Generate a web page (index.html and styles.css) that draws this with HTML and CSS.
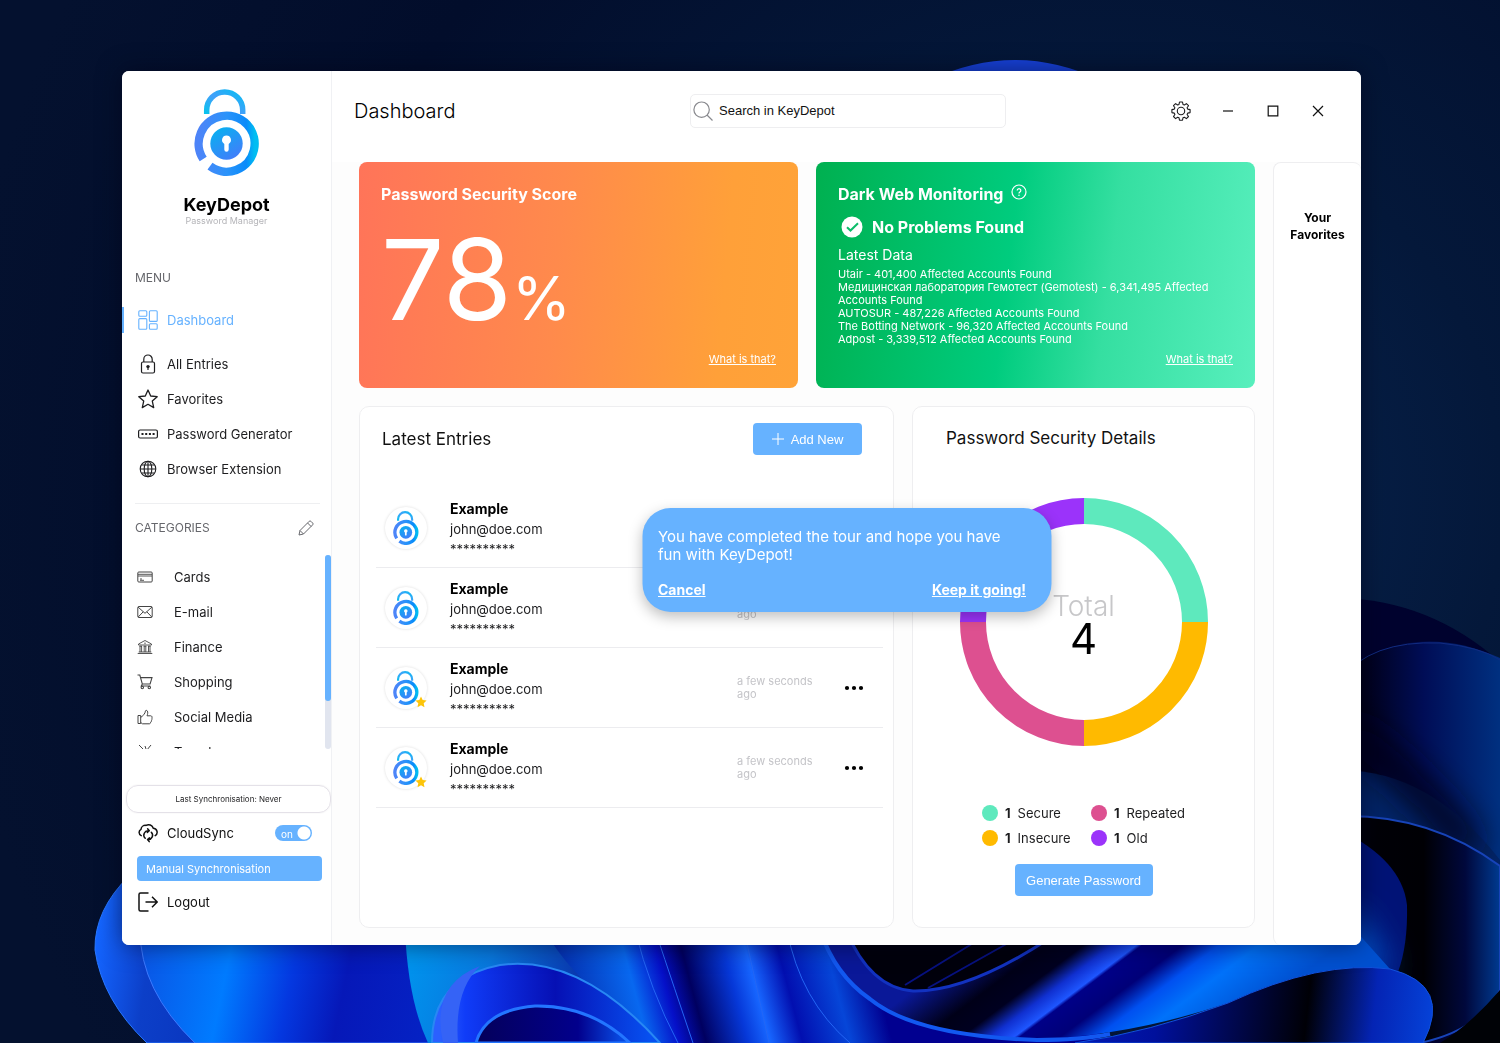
FILE: index.html
```html
<!DOCTYPE html>
<html lang="en">
<head>
<meta charset="utf-8">
<meta name="viewport" content="width=device-width, initial-scale=1">
<title>KeyDepot - Dashboard</title>
<link rel="stylesheet" href="styles.css">
</head>
<body>
<svg class="wallpaper" viewBox="0 0 1500 1043" preserveAspectRatio="xMidYMid slice" aria-hidden="true">
  <defs>
    <radialGradient id="night" cx="1100" cy="500" r="1150" gradientUnits="userSpaceOnUse"><stop offset="0" stop-color="#082654"/><stop offset=".35" stop-color="#04183a"/><stop offset=".7" stop-color="#020d2b"/><stop offset="1" stop-color="#04112f"/></radialGradient>
    <linearGradient id="petal" x1="95" x2="430" y1="950" y2="1000" gradientUnits="userSpaceOnUse"><stop offset="0" stop-color="#1465ff"/><stop offset=".16" stop-color="#0c3fc8"/><stop offset="1" stop-color="#0015a0"/></linearGradient>
    <linearGradient id="petal2" x1="140" x2="430" y1="950" y2="1010" gradientUnits="userSpaceOnUse"><stop offset="0" stop-color="#0a54e4"/><stop offset=".3" stop-color="#007bff"/><stop offset=".52" stop-color="#0438e0"/><stop offset=".7" stop-color="#0618b8"/><stop offset="1" stop-color="#0522c4"/></linearGradient>
    <linearGradient id="cyan" x1="405" x2="600" y1="960" y2="1020" gradientUnits="userSpaceOnUse"><stop offset="0" stop-color="#0094ee"/><stop offset=".4" stop-color="#0878de"/><stop offset="1" stop-color="#0a1f9e"/></linearGradient>
    <linearGradient id="loop" x1="440" x2="650" y1="0" y2="0" gradientUnits="userSpaceOnUse"><stop offset="0" stop-color="#2b60ff"/><stop offset=".12" stop-color="#103cf8"/><stop offset=".55" stop-color="#0610b4"/><stop offset="1" stop-color="#0750f0"/></linearGradient>
    <linearGradient id="hole" x1="480" x2="620" y1="0" y2="0" gradientUnits="userSpaceOnUse"><stop offset="0" stop-color="#04005c"/><stop offset=".7" stop-color="#02008c"/><stop offset="1" stop-color="#0848e0"/></linearGradient>
    <linearGradient id="strand" x1="560" x2="860" y1="40" y2="-40" gradientUnits="userSpaceOnUse" gradientTransform="translate(0 960)"><stop offset="0" stop-color="#0428a8"/><stop offset=".24" stop-color="#0868f0"/><stop offset=".34" stop-color="#0510c8"/><stop offset=".42" stop-color="#000060"/><stop offset=".55" stop-color="#0638d8"/><stop offset=".62" stop-color="#1766ff"/><stop offset=".72" stop-color="#020fb0"/><stop offset=".87" stop-color="#0646d8"/><stop offset="1" stop-color="#010090"/></linearGradient>
    <linearGradient id="ribbon" x1="883" x2="1015" y1="1013" y2="1189" gradientUnits="userSpaceOnUse"><stop offset="0" stop-color="#0a1898"/><stop offset=".2" stop-color="#000018"/><stop offset=".3" stop-color="#000020"/><stop offset=".38" stop-color="#1030d0"/><stop offset=".445" stop-color="#1e56ff"/><stop offset=".46" stop-color="#000088"/><stop offset=".57" stop-color="#000078"/><stop offset=".67" stop-color="#0050f0"/><stop offset=".78" stop-color="#0072fa"/><stop offset="1" stop-color="#0050d0"/></linearGradient>
    <linearGradient id="tail" x1="1040" x2="1430" y1="1000" y2="1043" gradientUnits="userSpaceOnUse"><stop offset="0" stop-color="#0520c0"/><stop offset=".3" stop-color="#00109c"/><stop offset=".68" stop-color="#000006"/><stop offset=".85" stop-color="#0424b4"/><stop offset="1" stop-color="#0542d8"/></linearGradient>
    <linearGradient id="right1" x1="1361" x2="1500" y1="0" y2="0" gradientUnits="userSpaceOnUse"><stop offset="0" stop-color="#000018"/><stop offset=".45" stop-color="#000d56"/><stop offset="1" stop-color="#003080"/></linearGradient>
    <linearGradient id="right2" x1="1361" x2="1500" y1="0" y2="0" gradientUnits="userSpaceOnUse"><stop offset="0" stop-color="#000008"/><stop offset=".45" stop-color="#000004"/><stop offset=".75" stop-color="#00083c"/><stop offset="1" stop-color="#003a90"/></linearGradient>
    <filter id="soft" x="-60%" y="-60%" width="220%" height="220%"><feGaussianBlur stdDeviation="16"/></filter>
  </defs>
  <rect width="1500" height="1043" fill="url(#night)"/>
  <path d="M930 80Q1015 40 1100 80Z" fill="#1741d8"/>
  <path d="M1340 598Q1430 600 1500 662V1043H1340Z" fill="#00022e"/>
  <path d="M1340 675Q1410 618 1500 658V900H1340Z" fill="url(#right1)"/>
  <path d="M1340 680Q1370 640 1440 643Q1480 647 1500 660" fill="none" stroke="#122c82"/>
  <path d="M1340 770Q1430 770 1500 860V880H1340Z" fill="#022468"/>
  <path d="M1345 730Q1420 780 1470 850" fill="none" stroke="#00001c" stroke-width="30" filter="url(#soft)"/>
  <path d="M1340 816Q1430 814 1500 866V990Q1480 1030 1420 1043H1340Z" fill="url(#right2)" stroke="#1743b8" stroke-width="2"/>
  <path d="M1340 830Q1402 860 1407 905Q1408 945 1398 972L1340 960Z" fill="#011376"/>
  <path d="M1340 910Q1362 912 1372 940L1392 972H1340Z" fill="#0658ce" filter="url(#soft)"/>
  <path d="M1500 990Q1470 1025 1440 1043H1500Z" fill="#000206"/>
  <path d="M130 875Q94 910 95 950Q102 1000 147 1043H440V930Z" fill="url(#petal)" stroke="#2877ff"/>
  <path d="M140 930Q140 990 195 1043H440V930Z" fill="url(#petal2)" stroke="#3d7aff"/>
  <path d="M405 930Q408 1000 428 1043H700V930Z" fill="url(#cyan)"/>
  <path d="M545 930Q570 980 660 1043H1100V930Z" fill="url(#strand)"/>
  <path d="M432 1043Q432 978 500 965Q580 954 660 1043Z" fill="url(#loop)" stroke="#2888f4" stroke-width="2"/>
  <path d="M443 1043Q430 985 480 966Q454 990 458 1043Z" fill="#3563f6"/>
  <path d="M476 1043Q485 1010 535 1006Q590 1005 630 1043Z" fill="url(#hole)" stroke="#2375ff" stroke-width="3"/>
  <path d="M635 930Q650 990 678 1043M655 930Q675 990 693 1043M744 930L769 1043M787 930Q800 1000 850 1043" fill="none" stroke="#2466f5"/>
  <path d="M820 930Q835 980 870 997Q910 1034 1037 1039Q1130 1036 1228 1003Q1320 960 1390 969L1355 930Z" fill="url(#ribbon)"/>
  <path d="M820 930Q835 975 870 999Q915 1036 1037 1040Q1080 1040 1110 1034" fill="none" stroke="#1258f0" stroke-width="4"/>
  <path d="M846 930Q870 988 913 991Q968 992 1050 938V930Z" fill="#00000c" stroke="#1232c0" stroke-width="3"/>
  <path d="M905 985L975 942M928 988L1010 942" stroke="#071180" stroke-width="2"/>
  <path d="M1075 1043Q1150 1032 1228 1003Q1320 960 1390 969Q1453 985 1423 1043Z" fill="url(#tail)" stroke="#1151dc"/>
</svg>

<svg class="sprite" aria-hidden="true">
  <defs>
    <linearGradient id="g-ring" x1="0" y1="0" x2="1" y2="0"><stop offset="0" stop-color="#4d84f8"/><stop offset=".5" stop-color="#2b93fa"/><stop offset=".85" stop-color="#0a8bfa"/><stop offset="1" stop-color="#00bdf2"/></linearGradient>
    <linearGradient id="g-shackle" x1="0" y1="1" x2="1" y2="0"><stop offset="0" stop-color="#08c3ee"/><stop offset=".5" stop-color="#42a0fa"/><stop offset="1" stop-color="#08bdf2"/></linearGradient>
    <linearGradient id="g-disc" x1="0" y1="0" x2=".6" y2="1"><stop offset="0" stop-color="#02b5ef"/><stop offset="1" stop-color="#3f80fa"/></linearGradient>
  </defs>
  <symbol id="logo" viewBox="0 0 66 87">
    <path d="M12.700 25V21a18 18 0 0 1 36 0V25" fill="none" stroke="url(#g-shackle)" stroke-width="5.500"/>
    <path d="M16 77.200A28 28 0 1 0 9.200 70" fill="none" stroke="url(#g-ring)" stroke-width="8.400"/>
    <circle cx="32.500" cy="54.500" r="16.200" fill="url(#g-disc)"/>
    <path d="M32.500 46.500a4.500 4.500 0 0 0-2.200 8.400v5.600a2.200 2.200 0 0 0 4.400 0v-5.600a4.500 4.500 0 0 0-2.200-8.400Z" fill="#fff"/>
  </symbol>
  <symbol id="i-dash" viewBox="0 0 20 20"><g fill="none" stroke="currentColor" stroke-width="1.100"><rect x=".8" y=".8" width="8" height="5.400" rx="1"/><rect x=".8" y="8.600" width="8" height="10.600" rx="1"/><rect x="11.400" y=".8" width="7.800" height="10.600" rx="1"/><rect x="11.400" y="13.800" width="7.800" height="5.400" rx="1"/></g></symbol>
  <symbol id="i-lock" viewBox="0 0 20 20"><g fill="none" stroke="currentColor" stroke-width="1.200"><rect x="3.500" y="8" width="13" height="11" rx="1.500"/><path d="M5.800 8V5.200a4.200 4.200 0 0 1 8.400 0V8M10 13v3"/></g><circle cx="10" cy="12.600" r="1.700" fill="currentColor"/></symbol>
  <symbol id="i-star" viewBox="0 0 20 20"><path d="M10 1l2.700 6 6.500.700-4.900 4.400 1.400 6.500L10 15.300 4.300 18.600l1.400-6.500L.8 7.700 7.300 7Z" fill="none" stroke="currentColor" stroke-width="1.300" stroke-linejoin="round"/></symbol>
  <symbol id="i-pass" viewBox="0 0 20 20"><rect x=".6" y="6" width="18.800" height="8" rx="1.500" fill="none" stroke="currentColor" stroke-width="1.200"/><path d="M3.500 10h2M7.200 10h2M10.900 10h2M14.600 10h2" stroke="currentColor" stroke-width="2.200"/></symbol>
  <symbol id="i-globe" viewBox="0 0 20 20"><g fill="none" stroke="currentColor" stroke-width="1.100"><circle cx="10" cy="10" r="7.800"/><ellipse cx="10" cy="10" rx="3.800" ry="7.800"/><path d="M10 2v16M2 10h16M3.600 6h12.800M3.600 14h12.800"/></g></symbol>
  <symbol id="i-pencil" viewBox="0 0 16 16"><path d="M1 15l1-4.500L11.200 1.300a1.200 1.200 0 0 1 1.700 0l1.800 1.800a1.200 1.200 0 0 1 0 1.700L5.500 14ZM2 10.500L5.500 14M9.600 3l3.500 3.500" fill="none" stroke="currentColor"/></symbol>
  <symbol id="i-card" viewBox="0 0 16 16"><g fill="none" stroke="currentColor"><rect x=".8" y="3" width="14.400" height="10" rx="1"/><path d="M1 5.300h14M1 7h14M3 10h2M3 11.300h4" stroke-width=".9"/></g></symbol>
  <symbol id="i-mail" viewBox="0 0 16 16"><g fill="none" stroke="currentColor"><rect x=".8" y="2.500" width="14.400" height="11" rx="1"/><path d="M1 3l7 6.300L15 3M1.200 13l5-5.200M14.800 13l-5-5.200"/></g></symbol>
  <symbol id="i-bank" viewBox="0 0 16 16"><path d="M1.500 6V5L8 1.500 14.500 5V6ZM.7 14.500h14.600M1.700 13h12.600M2.500 7.200h2.500M6.700 7.200h2.600M11 7.200h2.500M3 7v6M4.600 7v6M7.200 7v6M8.800 7v6M11.500 7v6M13 7v6M7.200 4.200h1.600" fill="none" stroke="currentColor" stroke-width=".9"/></symbol>
  <symbol id="i-cart" viewBox="0 0 16 16"><g fill="none" stroke="currentColor" stroke-width="1.100"><path d="M.5 1h2.300L5.300 10h7.800L15 3.600H3.600M5.300 10l-1 2h9"/><circle cx="5.300" cy="13.500" r="1.200"/><circle cx="12.300" cy="13.500" r="1.200"/></g></symbol>
  <symbol id="i-thumb" viewBox="0 0 16 16"><path d="M1 6.500h2.700v8H1ZM3.700 13.500L5.500 14.800h6.700c1 0 1.500-.8 1.300-1.600 1-.3 1.300-1.300.9-2 .8-.5.9-1.500.4-2.100.6-.9.100-2.300-1.100-2.300H10c.7-1.600 1-3.500.4-4.700-.5-1-1.800-1-2 0C8.300 4.700 6 6 5.200 7.500L3.700 8.200" fill="none" stroke="currentColor" stroke-linejoin="round"/></symbol>
  <symbol id="i-plane" viewBox="0 0 16 16"><path d="M2 1l5 5M14 1L5 12M8 2l4 12" fill="none" stroke="currentColor"/></symbol>
  <symbol id="i-sync" viewBox="0 0 20 20"><g fill="none" stroke="currentColor" stroke-width="1.500" stroke-linecap="round" stroke-linejoin="round"><path d="M3.200 12.600A3.500 3.500 0 0 1 3 6.300 4.500 4.500 0 0 1 8 2.400a5 5 0 0 1 7.300 2.800 4 4 0 0 1 1.900 7.400"/><path d="M7.200 15.200a4.300 4.300 0 0 1 3.500-7.400M9.600 5.800l1.700 2-2 1.700M13.300 9.200a4.300 4.300 0 0 1-3.600 7.300M11.200 18.600l-1.700-2 2-1.700"/></g></symbol>
  <symbol id="i-logout" viewBox="0 0 20 20"><path d="M10.500 1H2.500A1.500 1.500 0 0 0 1 2.500v15A1.500 1.500 0 0 0 2.500 19h8M7.500 10H19M14 4.800L19.200 10 14 15.200" fill="none" stroke="currentColor" stroke-width="1.500"/></symbol>
  <symbol id="i-search" viewBox="0 0 20 20"><path d="M8.600 1a7.700 7.700 0 1 1 0 15.400 7.700 7.700 0 0 1 0-15.400ZM14 14l5.500 5.500" fill="none" stroke="currentColor" stroke-width="1.200"/></symbol>
  <symbol id="i-gear" viewBox="0 0 20 20"><g fill="none" stroke="currentColor" stroke-width="1.100" stroke-linejoin="round"><path d="M8.500 1h3l.5 2.400 1.400.6 2-1.400 2.100 2.100-1.400 2 .6 1.400 2.400.5v3l-2.400.5-.6 1.400 1.400 2-2.100 2.100-2-1.400-1.400.6-.5 2.400h-3L8 16.800l-1.400-.6-2 1.400-2.100-2.100 1.400-2-.6-1.400L.9 11.600v-3l2.400-.5.6-1.400-1.400-2 2.100-2.100 2 1.400L8 3.400Z"/><circle cx="10" cy="10" r="3.700"/></g></symbol>
  <symbol id="i-help" viewBox="0 0 16 16"><g fill="none" stroke="currentColor" stroke-width="1.200"><circle cx="8" cy="8" r="7"/><path d="M6.200 6.500a1.800 1.800 0 1 1 2.700 1.600c-.6.400-.9.700-.9 1.300"/></g><circle cx="8" cy="11.200" r=".8" fill="currentColor"/></symbol>
  <symbol id="i-check" viewBox="0 0 22 22"><circle cx="11" cy="11" r="10.500" fill="#fff"/><path d="M6 11.200l3.500 3.300L17 7.300" fill="none" stroke="#0cbd6a" stroke-width="2"/></symbol>
  <symbol id="i-gold" viewBox="0 0 20 20"><path d="M10 .8l2.800 6 6.500.8-4.800 4.500 1.300 6.600L10 15.400l-5.800 3.300 1.300-6.600L.7 7.600l6.500-.8Z" fill="#fdc50a"/></symbol>
  <symbol id="i-dots" viewBox="0 0 20 6"><circle cx="3" cy="3" r="2.100"/><circle cx="10" cy="3" r="2.100"/><circle cx="17" cy="3" r="2.100"/></symbol>
</svg>

<div class="window">
  <aside class="sidebar">
    <div class="brand">
      <svg class="brand-logo"><use href="#logo"/></svg>
      <div class="brand-name">KeyDepot</div>
      <div class="brand-sub">Password Manager</div>
    </div>
    <h2 class="side-title">MENU</h2>
    <nav class="menu" aria-label="Menu">
      <a class="menu-item active" href="#"><svg class="icon20"><use href="#i-dash"/></svg>Dashboard</a>
      <a class="menu-item" href="#"><svg class="icon20"><use href="#i-lock"/></svg>All Entries</a>
      <a class="menu-item" href="#"><svg class="icon20"><use href="#i-star"/></svg>Favorites</a>
      <a class="menu-item" href="#"><svg class="icon20"><use href="#i-pass"/></svg>Password Generator</a>
      <a class="menu-item" href="#"><svg class="icon20"><use href="#i-globe"/></svg>Browser Extension</a>
    </nav>
    <div class="cat-head">
      <h2 class="side-title">CATEGORIES</h2>
      <button class="bare" type="button" aria-label="Edit categories"><svg class="icon16"><use href="#i-pencil"/></svg></button>
    </div>
    <div class="cat-scroll">
      <nav class="cats" aria-label="Categories">
        <a class="cat" href="#"><svg class="icon16"><use href="#i-card"/></svg>Cards</a>
        <a class="cat" href="#"><svg class="icon16"><use href="#i-mail"/></svg>E-mail</a>
        <a class="cat" href="#"><svg class="icon16"><use href="#i-bank"/></svg>Finance</a>
        <a class="cat" href="#"><svg class="icon16"><use href="#i-cart"/></svg>Shopping</a>
        <a class="cat" href="#"><svg class="icon16"><use href="#i-thumb"/></svg>Social Media</a>
        <a class="cat" href="#"><svg class="icon16"><use href="#i-plane"/></svg>Travel</a>
      </nav>
      <div class="track"><div class="thumb"></div></div>
    </div>
    <div class="last-sync">Last Synchronisation: Never</div>
    <div class="sync-row">
      <svg class="icon20"><use href="#i-sync"/></svg>
      <label for="cloudsync">CloudSync</label>
      <span class="switch"><input id="cloudsync" type="checkbox" checked><span class="switch-text">on</span></span>
    </div>
    <button class="manual" type="button">Manual Synchronisation</button>
    <a class="logout" href="#"><svg class="icon20"><use href="#i-logout"/></svg>Logout</a>
  </aside>

  <main class="main">
    <header class="topbar">
      <h1 class="page-title">Dashboard</h1>
      <label class="search"><svg class="icon20"><use href="#i-search"/></svg><input type="search" aria-label="Search in KeyDepot" placeholder="Search in KeyDepot"></label>
      <div class="controls">
        <button class="bare" type="button" aria-label="Settings"><svg class="icon20"><use href="#i-gear"/></svg></button>
        <button class="bare" type="button" aria-label="Minimize"><svg class="icon12" viewBox="0 0 12 12"><path d="M1 6h10" stroke="#111" stroke-width="1.200"/></svg></button>
        <button class="bare" type="button" aria-label="Maximize"><svg class="icon12" viewBox="0 0 12 12"><path d="M1.200 1.200h9.600v9.600H1.200Z" fill="none" stroke="#111" stroke-width="1.200"/></svg></button>
        <button class="bare" type="button" aria-label="Close"><svg class="icon12" viewBox="0 0 12 12"><path d="M1 1l10 10M11 1L1 11" stroke="#111" stroke-width="1.200"/></svg></button>
      </div>
    </header>

    <div class="body">
      <div class="content">
        <div class="cards">
          <section class="card score">
            <h2 class="card-title">Password Security Score</h2>
            <div class="score-value">78<span class="percent">%</span></div>
            <a class="what" href="#">What is that?</a>
          </section>
          <section class="card darkweb">
            <h2 class="card-title">Dark Web Monitoring <svg class="icon16"><use href="#i-help"/></svg></h2>
            <div class="status"><svg class="icon22"><use href="#i-check"/></svg>No Problems Found</div>
            <h3 class="latest">Latest Data</h3>
            <ul class="breaches">
              <li>Utair - 401,400 Affected Accounts Found</li>
              <li>Медицинская лаборатория Гемотест (Gemotest) - 6,341,495 Affected Accounts Found</li>
              <li>AUTOSUR - 487,226 Affected Accounts Found</li>
              <li>The Botting Network - 96,320 Affected Accounts Found</li>
              <li>Adpost - 3,339,512 Affected Accounts Found</li>
            </ul>
            <a class="what" href="#">What is that?</a>
          </section>
        </div>
        <div class="panels">
          <section class="panel entries">
            <div class="entries-head">
              <h2 class="panel-title">Latest Entries</h2>
              <button class="btn add" type="button"><svg class="icon12" viewBox="0 0 12 12"><path d="M6 0v12M0 6h12" stroke="#fff"/></svg>Add New</button>
            </div>
            <ul class="entry-list">
              <li class="entry"><span class="avatar"><svg class="avatar-logo"><use href="#logo"/></svg></span><div class="who"><strong>Example</strong><span>john@doe.com</span><span class="stars">**********</span></div><span class="when">a few seconds ago</span><button class="bare" type="button" aria-label="More"><svg class="dots"><use href="#i-dots"/></svg></button></li>
              <li class="entry"><span class="avatar"><svg class="avatar-logo"><use href="#logo"/></svg></span><div class="who"><strong>Example</strong><span>john@doe.com</span><span class="stars">**********</span></div><span class="when">a few seconds ago</span><button class="bare" type="button" aria-label="More"><svg class="dots"><use href="#i-dots"/></svg></button></li>
              <li class="entry"><span class="avatar"><svg class="avatar-logo"><use href="#logo"/></svg><svg class="fav"><use href="#i-gold"/></svg></span><div class="who"><strong>Example</strong><span>john@doe.com</span><span class="stars">**********</span></div><span class="when">a few seconds ago</span><button class="bare" type="button" aria-label="More"><svg class="dots"><use href="#i-dots"/></svg></button></li>
              <li class="entry"><span class="avatar"><svg class="avatar-logo"><use href="#logo"/></svg><svg class="fav"><use href="#i-gold"/></svg></span><div class="who"><strong>Example</strong><span>john@doe.com</span><span class="stars">**********</span></div><span class="when">a few seconds ago</span><button class="bare" type="button" aria-label="More"><svg class="dots"><use href="#i-dots"/></svg></button></li>
            </ul>
          </section>
          <section class="panel details">
            <h2 class="panel-title">Password Security Details</h2>
            <div class="chart">
              <svg class="donut" viewBox="0 0 248 248" aria-hidden="true"><g fill="none" stroke-width="26"><path d="M124 13A111 111 0 0 1 235 124" stroke="#5ee9bd"/><path d="M235 124A111 111 0 0 1 124 235" stroke="#ffba00"/><path d="M124 235A111 111 0 0 1 13 124" stroke="#dd5090"/><path d="M13 124A111 111 0 0 1 124 13" stroke="#9b33fa"/></g></svg>
              <div class="chart-text"><span class="total">Total</span><span class="total-num">4</span></div>
            </div>
            <ul class="legend">
              <li><span class="dot secure"></span><b>1</b>Secure</li>
              <li><span class="dot repeated"></span><b>1</b>Repeated</li>
              <li><span class="dot insecure"></span><b>1</b>Insecure</li>
              <li><span class="dot old"></span><b>1</b>Old</li>
            </ul>
            <button class="btn generate" type="button">Generate Password</button>
          </section>
        </div>
      </div>
      <aside class="favorites"><h2>Your Favorites</h2></aside>
    </div>

    <div class="tour" role="dialog" aria-label="Tour finished">
      <p>You have completed the tour and hope you have fun with KeyDepot!</p>
      <div class="tour-actions"><button class="tour-btn" type="button">Cancel</button><button class="tour-btn" type="button">Keep it going!</button></div>
    </div>
  </main>
</div>
</body>
</html>
```
FILE: styles.css
```css
* { box-sizing: border-box; }

body {
  margin: 0;
  min-height: 100vh;
  padding: 71px 139px 98px 122px;
  display: flex;
  background: #03102e;
  color: #1d1d1f;
  font-family: Inter, "Liberation Sans", sans-serif;
  font-size: 13px;
  line-height: 16px;
}

h1, h2, h3, ul, p { margin: 0; padding: 0; }
ul { list-style: none; }
a { color: inherit; text-decoration: none; }
svg { display: block; flex: none; }

.wallpaper { position: fixed; inset: 0; width: 100%; height: 100%; z-index: -1; }
.sprite { position: absolute; width: 0; height: 0; }

.icon12 { width: 12px; height: 12px; }
.icon16 { width: 16px; height: 16px; }
.icon20 { width: 20px; height: 20px; }
.icon22 { width: 22px; height: 22px; }

.bare { border: 0; padding: 0; background: none; color: inherit; display: flex; align-items: center; justify-content: center; cursor: pointer; }
.btn { border: 0; border-radius: 4px; background: #66b2ff; color: #fff; height: 32px; font: 13px "Liberation Sans", Arial, sans-serif; cursor: pointer; }

.window { flex: 1; min-width: 0; display: flex; background: #fdfdfd; border-radius: 7px; overflow: hidden; box-shadow: 0 0 24px rgba(0, 0, 20, .5); }

/* Sidebar */
.sidebar { flex: none; width: 210px; padding-top: 18px; background: #fff; border-right: 1px solid #f0f1f4; }
.brand { display: flex; flex-direction: column; align-items: center; }
.brand-logo { width: 66px; height: 87px; }
.brand-name { margin-top: 18px; font-size: 18px; line-height: 22px; font-weight: 700; color: #000; }
.brand-sub { font-size: 9px; line-height: 10px; color: #b4b4b8; }
.side-title { font-size: 12px; line-height: 16px; font-weight: 400; color: #66676c; }
.brand + .side-title { margin: 44px 0 21px 13px; }

.menu { padding-bottom: 17px; }
.menu-item { height: 35px; padding-left: 16px; display: flex; align-items: center; gap: 9px; }
.menu-item.active { height: 26px; margin-bottom: 13px; padding-left: 14px; border-left: 2px solid #66b2ff; color: #66b2ff; }

.cat-head { display: flex; justify-content: space-between; align-items: center; margin: 0 11px 0 13px; padding: 16px 6px 19px 0; border-top: 1px solid #eeeff1; color: #66676c; }
.cat-scroll { display: flex; height: 194px; overflow: hidden; }
.cats { flex: 1; padding: 4px 0 0 15px; }
.cat { height: 35px; display: flex; align-items: center; gap: 21px; }
.cat svg { color: #444; }
.track { width: 6px; background: #e1e5ef; border-radius: 3px; }
.thumb { height: 75%; background: #66b2ff; border-radius: 3px; }

.last-sync { margin: 36px 0 8px 4px; height: 28px; border: 1px solid #e4e1e8; border-radius: 12px; display: flex; align-items: center; justify-content: center; font-size: 8px; box-shadow: 0 0 2px #eee; }
.sync-row { height: 24px; padding: 0 19px 0 16px; display: flex; align-items: center; gap: 9px; color: #111; }
.switch { position: relative; margin-left: auto; display: flex; }
.switch input { appearance: none; margin: 0; width: 37px; height: 16px; border-radius: 8px; background: radial-gradient(circle at 29px 8px, #fff 6px, #66b2ff 7px); }
.switch-text { position: absolute; left: 6px; top: 1px; color: #fff; font-size: 10px; pointer-events: none; }
.manual { display: block; width: 185px; height: 25px; margin: 11px 0 9px 15px; padding: 0 9px; border: 0; border-radius: 4px; background: #66b2ff; color: #fff; text-align: left; font: 11px Inter, sans-serif; }
.logout { height: 24px; margin-bottom: 31px; padding-left: 16px; display: flex; align-items: center; gap: 9px; color: #111; }

/* Main area */
.main { position: relative; flex: 1; min-width: 0; display: flex; flex-direction: column; }
.topbar { height: 91px; padding: 0 37px 12px 22px; display: grid; grid-template-columns: 336px minmax(0, 316px) 1fr; align-items: center; background: #fff; }
.page-title { font-size: 20px; line-height: 24px; font-weight: 300; color: #000; }
.search { height: 34px; display: flex; align-items: center; gap: 6px; padding: 0 2px; border: 1px solid #eeeef0; border-radius: 5px; color: #88898e; }
.search input { flex: 1; min-width: 0; border: 0; padding: 0; outline: 0; background: none; font: 13px "Liberation Sans", Arial, sans-serif; }
.search input::placeholder { color: #111; opacity: 1; }
.controls { display: flex; justify-content: flex-end; gap: 33px; align-items: center; }
.controls .bare:first-child { margin-right: -2px; }

.body { flex: 1; display: flex; gap: 18px; padding-left: 27px; }
.content { flex: 1; min-width: 0; padding-bottom: 17px; display: flex; flex-direction: column; gap: 18px; }
.cards { display: grid; grid-template-columns: 1fr 1fr; gap: 18px; }
.card { min-height: 226px; padding: 22px; border-radius: 8px; color: #fff; display: flex; flex-direction: column; }
.score { background: linear-gradient(95deg, #ff7459, #ff8a4c 45%, #ffa039 82%, #ffa338); }
.darkweb { background: linear-gradient(97deg, #00b050, #00cc7e 44%, #35dfa1 66%, #58efbd); }
.card-title { display: flex; gap: 8px; font-size: 16px; line-height: 20px; font-weight: 700; }
.score-value { margin-top: 7px; font-size: 112px; line-height: 136px; font-weight: 400; }
.percent { font-size: 60px; line-height: 60px; font-weight: 400; }
.what { margin-top: auto; align-self: flex-end; font-size: 11px; line-height: 13px; text-decoration: underline; }
.status { margin: 12px 0 8px 3px; display: flex; align-items: center; gap: 9px; font-size: 16px; line-height: 22px; font-weight: 700; }
.latest { font-size: 14px; line-height: 18px; font-weight: 400; margin-bottom: 4px; }
.breaches { font-size: 11px; line-height: 13px; }

.panels { flex: 1; display: grid; grid-template-columns: 535fr 343fr; gap: 18px; }
.panel { min-width: 0; background: #fff; border: 1px solid #eeeef0; border-radius: 10px; }
.panel-title { font-size: 17px; line-height: 20px; font-weight: 400; color: #111; }
.entries { padding-top: 16px; }
.entries-head { display: flex; align-items: center; justify-content: space-between; margin: 0 31px 33px 22px; }
.add { width: 109px; display: flex; align-items: center; justify-content: center; gap: 7px; }
.entry-list { margin: 0 10px 0 16px; }
.entry { height: 80px; padding: 0 19px 0 9px; display: flex; align-items: center; border-bottom: 1px solid #ececef; }
.avatar { position: relative; width: 42px; height: 42px; border-radius: 50%; background: #fff; box-shadow: 0 0 3px #ddd; display: flex; align-items: center; justify-content: center; }
.avatar-logo { width: 26px; height: 34px; }
.fav { position: absolute; right: 0; bottom: 1px; width: 12px; height: 12px; }
.who { margin-left: 23px; padding-top: 3px; flex: 1; display: flex; flex-direction: column; gap: 4px; }
.who strong { font-size: 14px; font-weight: 700; color: #000; }
.stars { line-height: 17px; }
.when { width: 88px; margin-right: 19px; font-size: 11px; line-height: 13px; color: #c4c4c8; }
.dots { width: 20px; height: 6px; }

.details { padding-top: 21px; display: flex; flex-direction: column; align-items: center; }
.details .panel-title { align-self: flex-start; margin: 0 0 50px 33px; }
.chart { display: grid; place-items: center; }
.chart > * { grid-area: 1 / 1; }
.donut { width: 248px; height: 248px; }
.chart-text { padding-top: 4px; display: flex; flex-direction: column; align-items: center; }
.total { font-size: 28px; line-height: 30px; font-weight: 300; color: #c7c7c9; }
.total-num { font-size: 42px; line-height: 36px; color: #000; }
.legend { margin: 54px 0 14px; display: grid; grid-template-columns: 109px 94px; }
.legend li { height: 25px; display: flex; align-items: center; }
.legend b { margin: 0 7px; font-weight: 700; }
.dot { width: 16px; height: 16px; border-radius: 50%; }
.secure { background: #5ee9bd; }
.repeated { background: #dd5090; }
.insecure { background: #ffba00; }
.old { background: #9b33fa; }
.generate { width: 138px; }

.favorites { flex: none; width: 88px; padding: 46px 10px 0; background: #fff; border: 1px solid #eeeef0; border-width: 1px 0 0 1px; border-radius: 8px 8px 0 8px; text-align: center; }
.favorites h2 { font-size: 12px; line-height: 17px; font-weight: 700; color: #000; }

/* Tour message, shown over the dashboard */
.tour { position: absolute; left: 50%; top: 50%; transform: translateX(-50%); width: 409px; padding: 20px 25px 12px 16px; border-radius: 28px; background: #66b2ff; color: #fff; box-shadow: 0 5px 14px rgba(0, 0, 0, .25); }
.tour p { font-size: 15px; line-height: 18px; }
.tour-actions { display: flex; justify-content: space-between; margin-top: 16px; }
.tour-btn { border: 0; padding: 0; background: none; color: #fff; font: 700 14px/20px Inter, sans-serif; text-decoration: underline; cursor: pointer; }
```
